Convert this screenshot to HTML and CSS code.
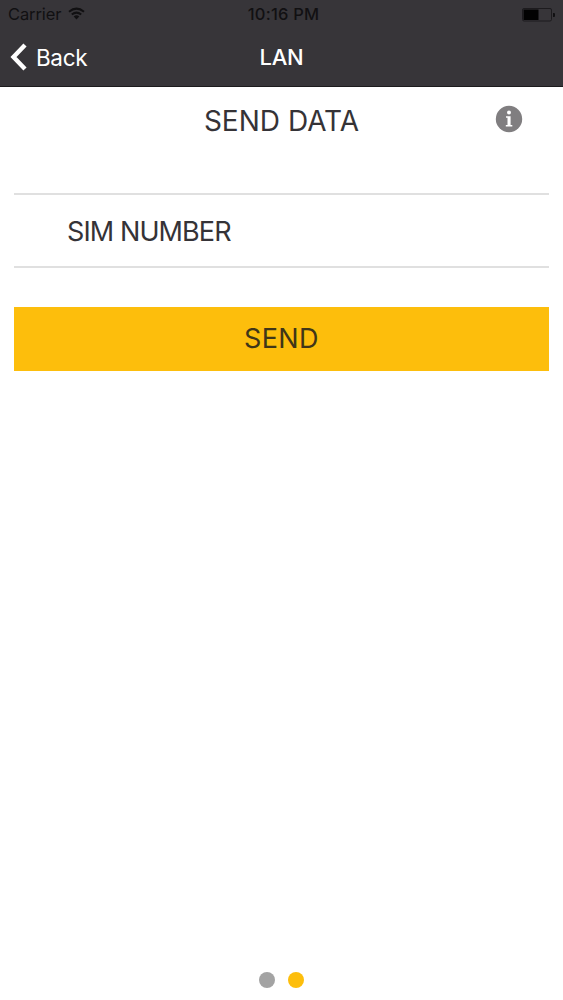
FILE: index.html
```html
<!DOCTYPE html>
<html lang="en">
<head>
<meta charset="utf-8">
<title>LAN</title>
<link rel="stylesheet" href="styles.css">
</head>
<body>
<div class="screen">
  <header class="top">
    <div class="status">
      <div class="carrier"><span>Carrier</span>
        <svg class="wifi" width="17" height="13" viewBox="0 0 17 13" fill="none" stroke="#111012" stroke-width="2"><path d="M1 4.700Q8.500-1.500 16 4.700M3.800 7.600Q8.500 3.600 13.200 7.600"/><path d="M5.700 9.500Q8.500 7.200 11.300 9.500L8.500 12.400Z" fill="#111012" stroke="none"/></svg>
      </div>
      <span class="time">10:16 PM</span>
      <svg class="battery" width="33" height="14" viewBox="0 0 33 14"><rect x=".5" y=".5" width="29" height="12.500" rx="1.500" fill="none" stroke="#1d1b1e"/><rect x="1.500" y="1.500" width="15" height="10.500" fill="#020202"/><path d="M31 5h1q1 0 1 1v2q0 1-1 1h-1z" fill="#111012"/></svg>
    </div>
    <nav class="nav">
      <a class="back"><svg width="17" height="28" viewBox="0 0 17 28" fill="none" stroke="#fff" stroke-width="4.400"><path d="M15 2L3.500 14L15 26"/></svg><span>Back</span></a>
      <span class="title">LAN</span>
    </nav>
  </header>
  <main class="content">
    <div class="heading">
      <h1>SEND DATA</h1>
      <svg class="info" width="28" height="28" viewBox="0 0 28 28"><circle cx="14" cy="14" r="13.200" fill="#807e80"/><circle cx="14" cy="7.500" r="2" fill="#fff"/><path d="M11 11.200h4.600v8.800h1.700v1.500h-6.500v-1.500h1.700v-7.300H11z" fill="#fff"/></svg>
    </div>
    <div class="field">SIM NUMBER</div>
    <button class="send"><span>SEND</span></button>
  </main>
  <footer class="dots"><i></i><i class="on"></i></footer>
</div>
</body>
</html>
```
FILE: styles.css
```css
* { box-sizing: border-box; }
body { margin: 0; background: #fff; font-family: Inter, "Liberation Sans", sans-serif; color: #353337; }
.screen { width: 563px; height: 1000px; display: flex; flex-direction: column; }
.top { height: 87px; background: #373539; border-bottom: 1px solid #1c1b1d; }
.status { height: 29px; padding: 0 8px; display: grid; grid-template-columns: 1fr auto 1fr; align-items: center; color: #111012; font-size: 16.500px; line-height: 29px; }
.carrier { display: flex; align-items: center; gap: 7px; letter-spacing: -.1px; }
.wifi { margin-top: -2px; }
.time { font-weight: 500; font-size: 16.500px; padding-left: 4px; letter-spacing: .2px; }
.battery { justify-self: end; }
.nav { height: 56px; display: grid; grid-template-columns: 1fr auto 1fr; align-items: center; padding: 0 10px; color: #fff; font-size: 22.500px; }
.back { display: flex; align-items: center; gap: 9px; letter-spacing: -.35px; }
.title { font-weight: 500; font-size: 22px; letter-spacing: -.2px; }
.content { flex: 1; padding: 0 14px; }
.heading { height: 106px; padding-top: 14px; display: grid; grid-template-columns: 1fr auto 1fr; align-items: start; }
h1 { grid-column: 2; margin: 0; font-size: 28px; font-weight: 400; line-height: 40px; letter-spacing: 0; }
.info { grid-column: 3; justify-self: end; margin: 4px 26px 0 0; }
.field { height: 75px; border: solid #e0e0e0; border-width: 2px 0; padding-left: 53px; font-size: 27px; line-height: 73px; letter-spacing: -.9px; }
.send { display: block; width: 100%; height: 64px; margin-top: 39px; border: 0; padding: 0; background: #fdbe0c; color: #403618; font: 400 27px/64px Inter, sans-serif; letter-spacing: .4px; }
.dots { height: 40px; display: flex; justify-content: center; align-items: center; gap: 13px; }
.dots i { width: 16px; height: 16px; border-radius: 50%; background: #a3a3a3; }
.dots .on { background: #fdbe0c; }
```
